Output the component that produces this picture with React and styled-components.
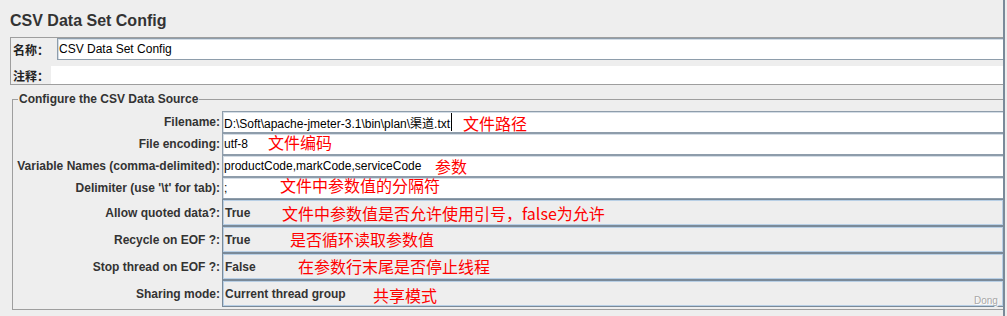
import React from 'react';
import styled, { createGlobalStyle } from 'styled-components';

const GlobalStyle = createGlobalStyle`
  html, body {
    margin: 0;
    padding: 0;
    background: #eeeeee;
  }
  body {
    font-family: "Liberation Sans", "Noto Sans CJK SC", Arial, sans-serif;
  }
`;

const Page = styled.div`
  position: relative;
  box-sizing: border-box;
  width: 1005px;
  height: 316px;
  padding: 11px 0 0 10px;
  border-right: 2px solid #7a8a99;
  background: #eeeeee;
  overflow: hidden;
`;

const Title = styled.h1`
  margin: 0;
  font-size: 16px;
  line-height: 20px;
  font-weight: bold;
  color: #333333;
`;

const NamePanel = styled.div`
  margin-top: 6px;
  border: 1px solid #9e9e9e;
  border-right: none;
  padding-left: 1px;
  display: flex;
  flex-direction: column;
  gap: 6px;
`;

const NameRow = styled.div`
  display: flex;
  align-items: center;
  height: ${(p) => p.$height}px;
`;

const CnLabel = styled.span`
  box-sizing: border-box;
  width: ${(p) => p.$width}px;
  padding-left: 1px;
  font-family: "Noto Sans CJK SC", sans-serif;
  font-size: 12px;
  font-weight: bold;
  color: #222222;
  white-space: nowrap;
`;

const NameField = styled.div`
  flex: 1;
  box-sizing: border-box;
  height: 100%;
  display: flex;
  align-items: center;
  padding-left: 1px;
  border: 1px solid #8e9dab;
  border-right: none;
  box-shadow: inset 1px 1px 0 #d4dde6;
  background: #ffffff;
  font-size: 12px;
  color: #000000;
`;

const CommentArea = styled.div`
  flex: 1;
  height: 100%;
  background: #ffffff;
`;

const Group = styled.fieldset`
  margin: 7px 0 0 2px;
  padding: 5px 0 2px 0;
  min-width: 0;
  border: 1px solid #9e9e9e;
  border-right: none;
`;

const Legend = styled.legend`
  margin-left: 5px;
  padding: 0 1px;
  font-size: 12px;
  line-height: 14px;
  font-weight: bold;
  color: #333333;
`;

const Form = styled.div`
  display: grid;
  grid-template-columns: 207px 1fr;
  column-gap: 2px;
`;

const Label = styled.label`
  display: flex;
  align-items: center;
  justify-content: flex-end;
  font-size: 12px;
  font-weight: bold;
  color: #333333;
  white-space: nowrap;
`;

const TextField = styled.div`
  position: relative;
  box-sizing: border-box;
  height: 22px;
  display: flex;
  align-items: center;
  padding-left: 1px;
  border: 1px solid #8e9dab;
  border-right: none;
  box-shadow: inset 1px 1px 0 #d4dde6;
  background: #ffffff;
  font-size: 12px;
  color: #000000;
  white-space: nowrap;
`;

const Combo = styled.div`
  position: relative;
  box-sizing: border-box;
  height: 27px;
  display: flex;
  align-items: center;
  padding-left: 2px;
  border: 1px solid #7a8a99;
  border-right: none;
  box-shadow: inset 0 0 0 1px #b8cfe5;
  background: #eeeeee;
  font-size: 12px;
  font-weight: bold;
  color: #333333;
  white-space: nowrap;
`;

const Caret = styled.span`
  display: inline-block;
  width: 1px;
  height: 18px;
  margin-left: 1px;
  background: #000000;
`;

const Note = styled.span`
  position: absolute;
  left: ${(p) => p.$left}px;
  top: ${(p) => p.$top}px;
  font-family: "Noto Sans CJK SC", sans-serif;
  font-size: 16px;
  line-height: 16px;
  font-weight: normal;
  color: #ff0000;
  white-space: nowrap;
`;

const Watermark = styled.span`
  position: absolute;
  left: 974px;
  top: 295px;
  font-size: 10px;
  line-height: 12px;
  color: #a8a8a8;
  text-shadow: 1px 1px 0 #ffffff;
`;

const textRows = [
  { label: 'Filename:', value: 'D:\\Soft\\apache-jmeter-3.1\\bin\\plan\\渠道.txt', caret: true, note: '文件路径', left: 240, top: 3 },
  { label: 'File encoding:', value: 'utf-8', note: '文件编码', left: 45, top: 0 },
  { label: 'Variable Names (comma-delimited):', value: 'productCode,markCode,serviceCode', note: '参数', left: 212, top: 2 },
  { label: "Delimiter (use '\\t' for tab):", value: ';', note: '文件中参数值的分隔符', left: 57, top: -1 },
];

const comboRows = [
  { label: 'Allow quoted data?:', value: 'True', note: '文件中参数值是否允许使用引号，false为允许', left: 59, top: 5 },
  { label: 'Recycle on EOF ?:', value: 'True', note: '是否循环读取参数值', left: 67, top: 4 },
  { label: 'Stop thread on EOF ?:', value: 'False', note: '在参数行末尾是否停止线程', left: 75, top: 4 },
  { label: 'Sharing mode:', value: 'Current thread group', note: '共享模式', left: 150, top: 6 },
];

export default function App() {
  return (
    <Page>
      <GlobalStyle />
      <Title>CSV Data Set Config</Title>
      <NamePanel>
        <NameRow $height={22}>
          <CnLabel $width={45}>名称：</CnLabel>
          <NameField>CSV Data Set Config</NameField>
        </NameRow>
        <NameRow $height={18}>
          <CnLabel $width={39}>注释：</CnLabel>
          <CommentArea />
        </NameRow>
      </NamePanel>
      <Group>
        <Legend>Configure the CSV Data Source</Legend>
        <Form>
          {textRows.map((r) => (
            <React.Fragment key={r.label}>
              <Label>{r.label}</Label>
              <TextField>
                {r.value}
                {r.caret && <Caret />}
                <Note $left={r.left} $top={r.top}>{r.note}</Note>
              </TextField>
            </React.Fragment>
          ))}
          {comboRows.map((r) => (
            <React.Fragment key={r.label}>
              <Label>{r.label}</Label>
              <Combo>
                {r.value}
                <Note $left={r.left} $top={r.top}>{r.note}</Note>
              </Combo>
            </React.Fragment>
          ))}
        </Form>
      </Group>
      <Watermark>Dong</Watermark>
    </Page>
  );
}
